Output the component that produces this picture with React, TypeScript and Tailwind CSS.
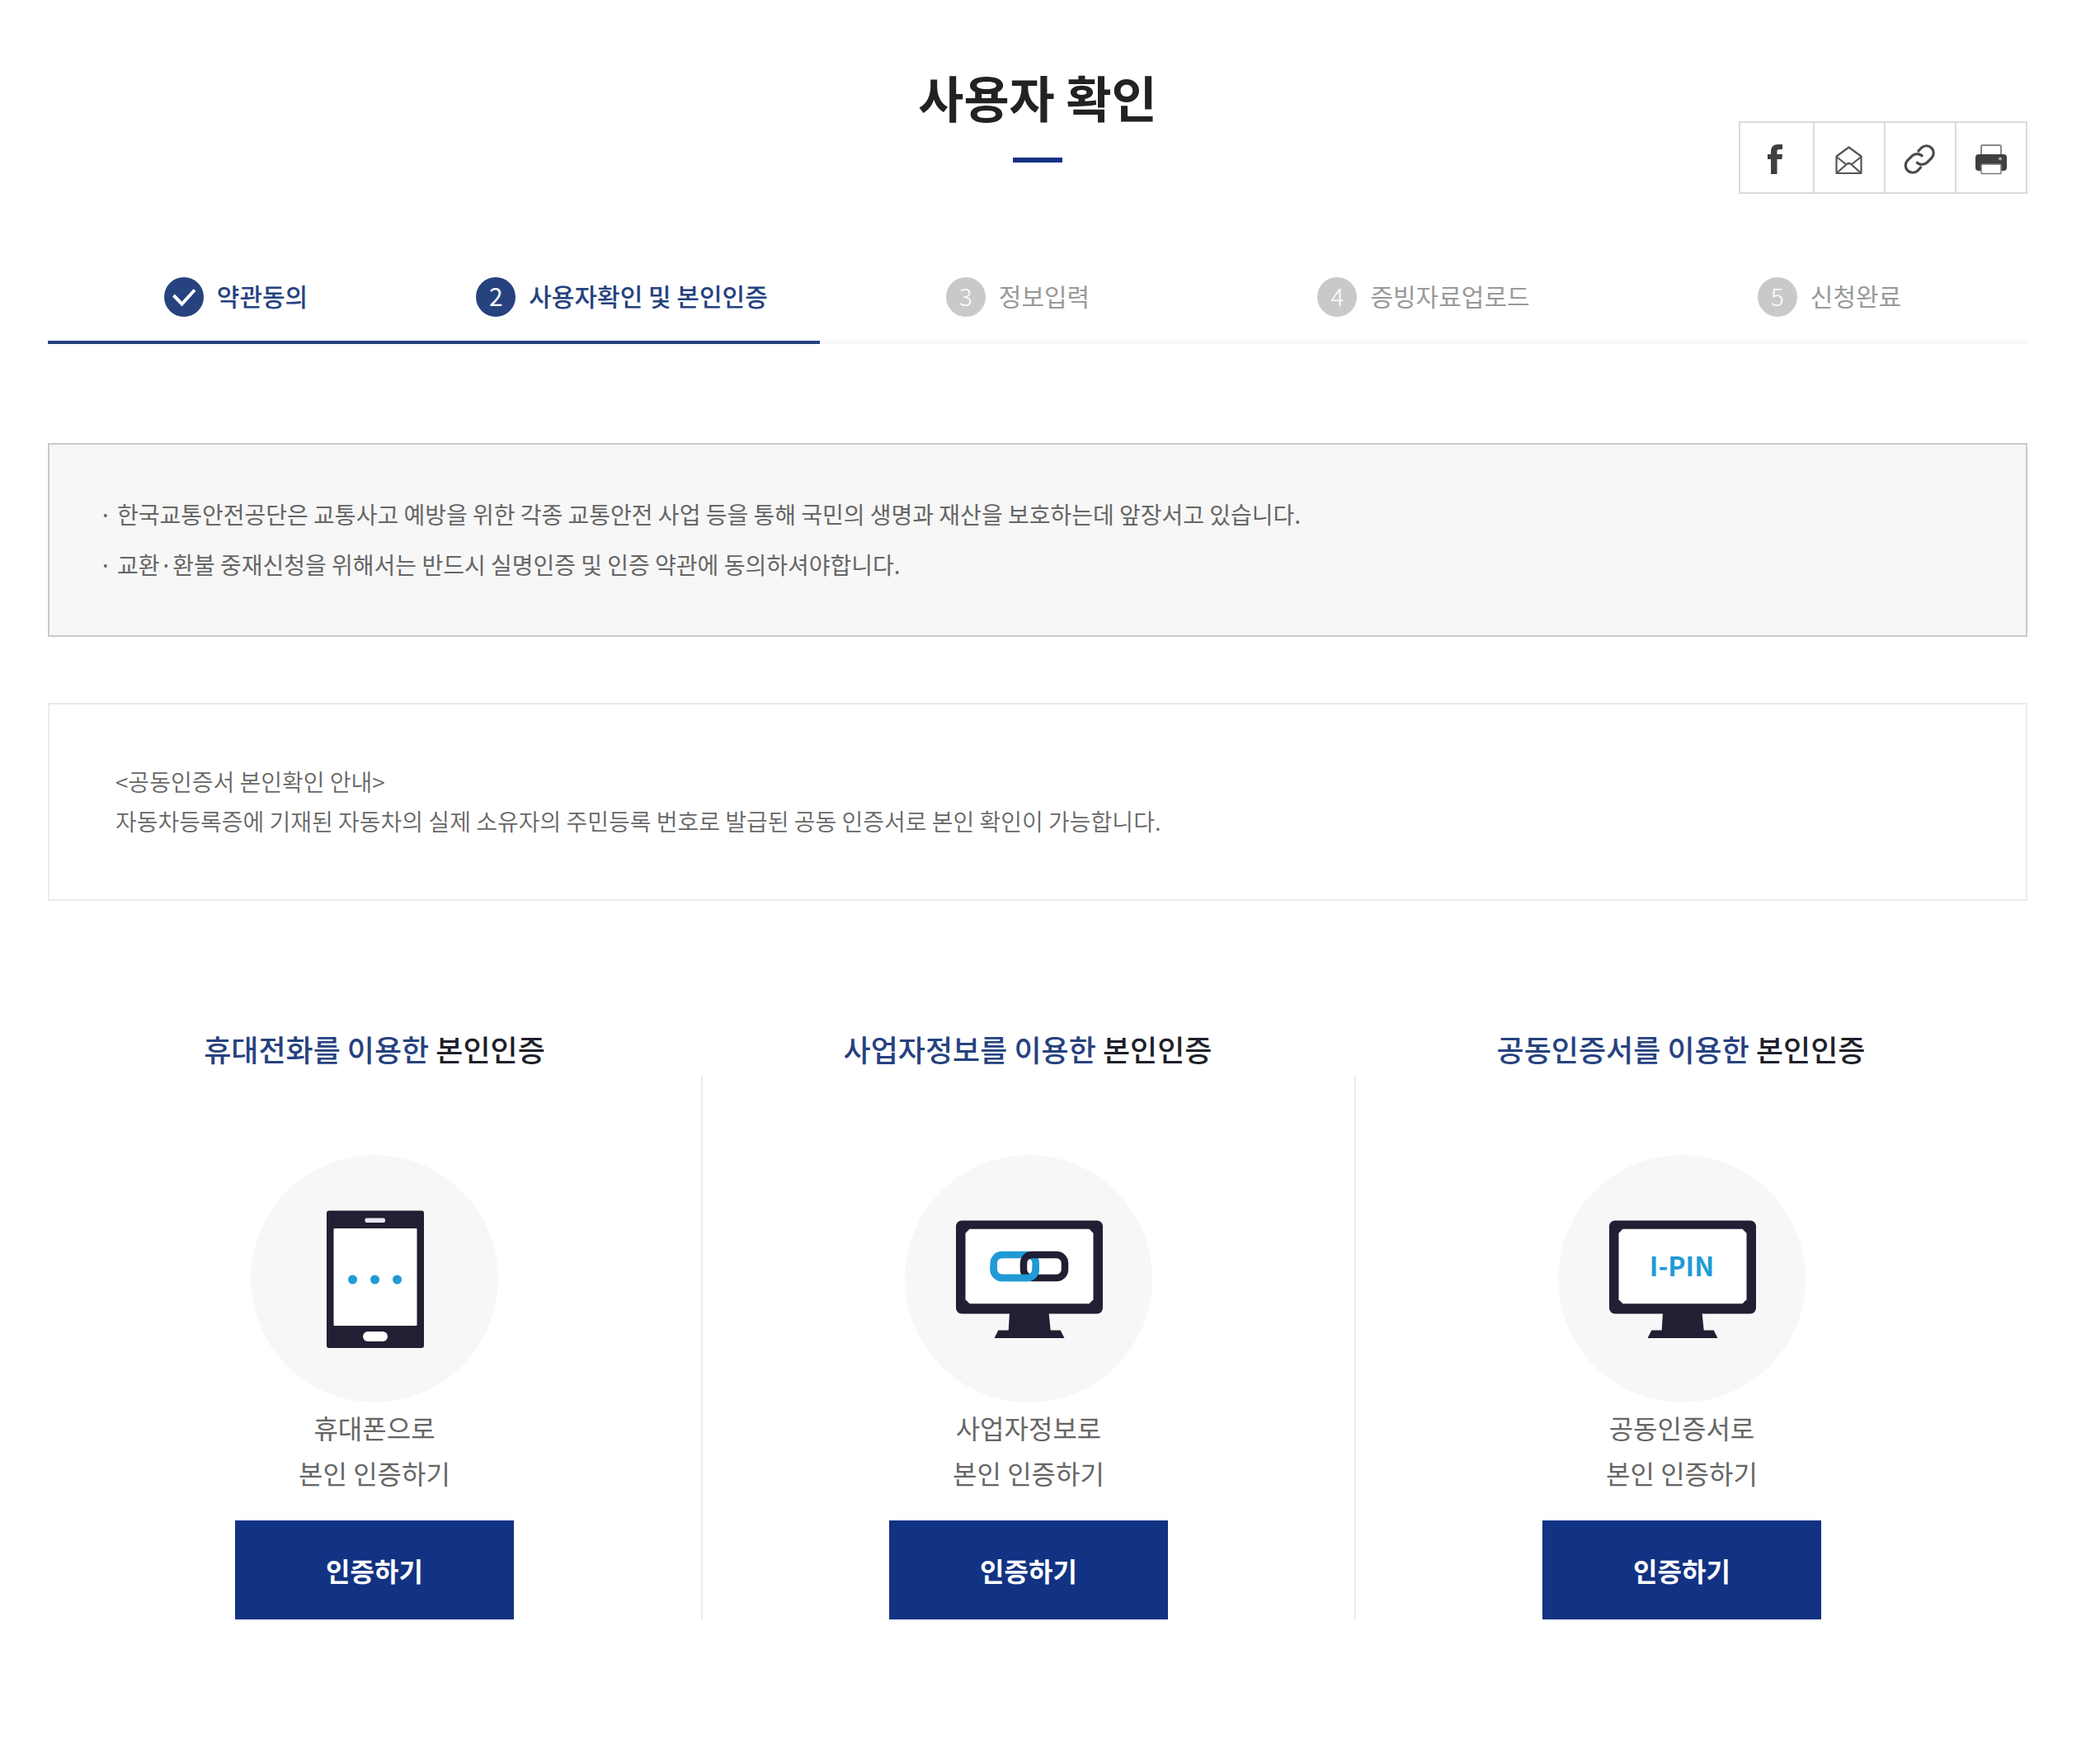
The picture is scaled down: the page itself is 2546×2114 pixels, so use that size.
import type { ReactNode } from "react";

const steps = [
  { label: "약관동의", state: "done" },
  { label: "사용자확인 및 본인인증", state: "current" },
  { label: "정보입력", state: "todo" },
  { label: "증빙자료업로드", state: "todo" },
  { label: "신청완료", state: "todo" },
];

const notices = [
  "한국교통안전공단은 교통사고 예방을 위한 각종 교통안전 사업 등을 통해 국민의 생명과 재산을 보호하는데 앞장서고 있습니다.",
  "교환·환불 중재신청을 위해서는 반드시 실명인증 및 인증 약관에 동의하셔야합니다.",
];

function FacebookIcon() {
  return (
    <svg viewBox="0 0 44 44" className="size-11" fill="#3f3f3f" aria-hidden="true">
      <path d="M15 42V24h-4v-6h4v-3c0-6 3-9 9-9h5v6h-4c-2 0-2.500 1-2.500 2.500V18H29l-.6 6h-5.900v18z" />
    </svg>
  );
}

function MailIcon() {
  return (
    <svg viewBox="0 0 44 44" className="size-11" fill="none" stroke="#555" strokeWidth="2.200" strokeLinejoin="round" aria-hidden="true">
      <path d="M6.500 20.500 21.500 9.500l15 11V41h-30z" />
      <path d="M6.500 21l12 9.500M36.500 21l-12 9.500M7 40.500 19 30q2.500-2 5 0l12 10.500" />
    </svg>
  );
}

function LinkIcon() {
  return (
    <svg viewBox="0 0 44 44" className="size-11" fill="none" stroke="#4a4a4a" strokeWidth="3.200" aria-hidden="true">
      <path d="M19 15l4.500-4.800a8.700 8.700 0 0 1 12.400 12.200l-5.400 5.400a8.700 8.700 0 0 1-13-.6" />
      <path d="M23.500 33l-4.500 4.800A8.700 8.700 0 0 1 6.600 25.600l5.400-5.400a8.700 8.700 0 0 1 13 .6" />
    </svg>
  );
}

function PrinterIcon() {
  return (
    <svg viewBox="0 0 44 44" className="size-11" aria-hidden="true">
      <rect x="10" y="7" width="24" height="20" rx="2" fill="#fff" stroke="#8a8a8a" strokeWidth="2" />
      <path d="M7 18h30q4 0 4 4v12q0 4-4 4H7q-4 0-4-4V22q0-4 4-4z" fill="#3f3f3f" />
      <rect x="10" y="30" width="24" height="11.500" rx="1" fill="#fff" stroke="#777" strokeWidth="1.500" />
      <circle cx="33" cy="23.500" r="2" fill="#aaa" />
    </svg>
  );
}

const shareItems = [
  { name: "페이스북 공유", icon: <FacebookIcon /> },
  { name: "메일 보내기", icon: <MailIcon /> },
  { name: "링크 복사", icon: <LinkIcon /> },
  { name: "인쇄", icon: <PrinterIcon /> },
];

function PhoneArt() {
  return (
    <svg viewBox="0 0 300 300" className="size-full" aria-hidden="true">
      <rect x="92" y="67.500" width="118" height="166.500" rx="3" fill="#201f33" />
      <rect x="100.500" y="89" width="101" height="118" rx="1" fill="#fff" />
      <rect x="138.500" y="76.500" width="24.500" height="5.500" rx="2" fill="#e8e6f4" />
      <rect x="136" y="214" width="30" height="12" rx="6" fill="#fff" />
      <circle cx="123.500" cy="151" r="5.500" fill="#209ad6" />
      <circle cx="150.500" cy="151" r="5.500" fill="#209ad6" />
      <circle cx="177.500" cy="151" r="5.500" fill="#209ad6" />
    </svg>
  );
}

function MonitorArt({ children }: { children: ReactNode }) {
  return (
    <svg viewBox="0 0 300 300" className="size-full" aria-hidden="true">
      <rect x="62" y="79.500" width="178" height="113" rx="7" fill="#201f33" />
      <path d="M127 191h47.500l2.200 21.500h12l4.800 9.500h-85l4.800-9.500h12.400z" fill="#201f33" />
      <path d="M78.500 89.700h145l5 5v80.600l-5 5h-145l-5-5V94.700z" fill="#fff" />
      {children}
    </svg>
  );
}

function ChainArt() {
  return (
    <MonitorArt>
      <defs>
        <clipPath id="chain-lower">
          <rect x="96" y="135" width="110" height="30" />
        </clipPath>
      </defs>
      <g fill="none" strokeWidth="8.500">
        <rect x="107.700" y="121" width="51" height="28" rx="10" stroke="#209ad6" />
        <rect x="144" y="121" width="50" height="28" rx="10" stroke="#201f33" />
        <rect x="107.700" y="121" width="51" height="28" rx="10" stroke="#209ad6" clipPath="url(#chain-lower)" />
      </g>
    </MonitorArt>
  );
}

function IpinArt() {
  return (
    <MonitorArt>
      <text x="150" y="147" textAnchor="middle" fontSize="32" fontWeight="700" fill="#209ad6">
        I-PIN
      </text>
    </MonitorArt>
  );
}

const methods = [
  { title: "휴대전화를 이용한", lead: "휴대폰으로", art: <PhoneArt /> },
  { title: "사업자정보를 이용한", lead: "사업자정보로", art: <ChainArt /> },
  { title: "공동인증서를 이용한", lead: "공동인증서로", art: <IpinArt /> },
];

export default function App() {
  return (
    <main className="min-h-screen bg-white pt-[73px] pr-[88px] pb-[150px] pl-[58px] font-['Noto_Sans_CJK_KR',sans-serif] text-[#666]">
      <header className="relative flex flex-col items-center">
        <h1 className="text-[60px] leading-[88px] font-bold text-[#222]">사용자 확인</h1>
        <div className="mt-[30px] h-1.5 w-[60px] bg-[#123283]" />
        <ul className="absolute top-[74px] right-0 flex divide-x-2 divide-[#dadada] border-2 border-[#dadada]">
          {shareItems.map((item, i) => (
            <li key={item.name}>
              <button
                type="button"
                aria-label={item.name}
                className={i === 0 ? "flex h-[84px] w-[88px] items-center justify-center" : "flex size-[84px] items-center justify-center"}
              >
                {item.icon}
              </button>
            </li>
          ))}
        </ul>
      </header>

      <ol className="mt-[119px] grid grid-cols-[456fr_480fr_480fr_504fr_480fr]">
        {steps.map((step, i) => {
          const active = step.state !== "todo";
          return (
            <li
              key={step.label}
              aria-current={step.state === "current" ? "step" : undefined}
              className={
                active
                  ? "flex h-[101px] items-start justify-center gap-4 border-b-4 border-[#26427f] pt-5 font-medium text-[#26427f]"
                  : "flex h-[101px] items-start justify-center gap-4 border-b-4 border-[#f8f8f8] pt-5 text-[#999]"
              }
            >
              <span
                className={
                  active
                    ? "flex size-12 justify-center rounded-full bg-[#26427f] text-[30px] leading-[44px] font-normal text-white"
                    : "flex size-12 justify-center rounded-full bg-[#c9c9c9] text-[30px] leading-[44px] font-light text-white"
                }
              >
                {step.state === "done" ? (
                  <svg viewBox="0 0 48 48" className="size-12" fill="none" stroke="#fff" strokeWidth="4" aria-label="완료">
                    <path d="M11.500 22l10 10.500L37 15.500" />
                  </svg>
                ) : (
                  i + 1
                )}
              </span>
              <span className="text-[30px] leading-[44px]">{step.label}</span>
            </li>
          );
        })}
      </ol>

      <ul className="mt-[120px] border-2 border-[#c9c9c9] bg-[#f7f7f7] px-[60px] pt-[54px] pb-[55px] text-[28px] leading-[61px]">
        {notices.map((text) => (
          <li key={text} className="flex">
            <span className="w-[22px] shrink-0">·</span>
            <span>{text}</span>
          </li>
        ))}
      </ul>

      <section className="mt-20 border-2 border-[#ebebeb] px-20 pt-[69px] pb-[71px] text-[28px] leading-[48px] font-[350]">
        <p>&lt;공동인증서 본인확인 안내&gt;</p>
        <p>자동차등록증에 기재된 자동차의 실제 소유자의 주민등록 번호로 발급된 공동 인증서로 본인 확인이 가능합니다.</p>
      </section>

      <div className="mt-[151px] mr-6 grid grid-cols-3">
        {methods.map((method, i) => (
          <section key={method.lead} className="flex flex-col">
            <h2 className="pb-[5px] text-center text-[36px] leading-[56px] font-medium text-[#201f2b]">
              <span className="text-[#26427f]">{method.title}</span> 본인인증
            </h2>
            <div
              className={
                i > 0
                  ? "flex flex-col items-center border-l-2 border-[#ebebeb] pt-24"
                  : "flex flex-col items-center pt-24"
              }
            >
              <div className="size-[300px] rounded-full bg-[#f7f7f7]">{method.art}</div>
              <p className="mt-[3px] text-center text-[32px] leading-[55px]">
                {method.lead}
                <br />
                본인 인증하기
              </p>
              <button type="button" className="mt-[30px] h-[120px] w-[338px] bg-[#123283] text-[32px] font-bold text-white">
                인증하기
              </button>
            </div>
          </section>
        ))}
      </div>
    </main>
  );
}
